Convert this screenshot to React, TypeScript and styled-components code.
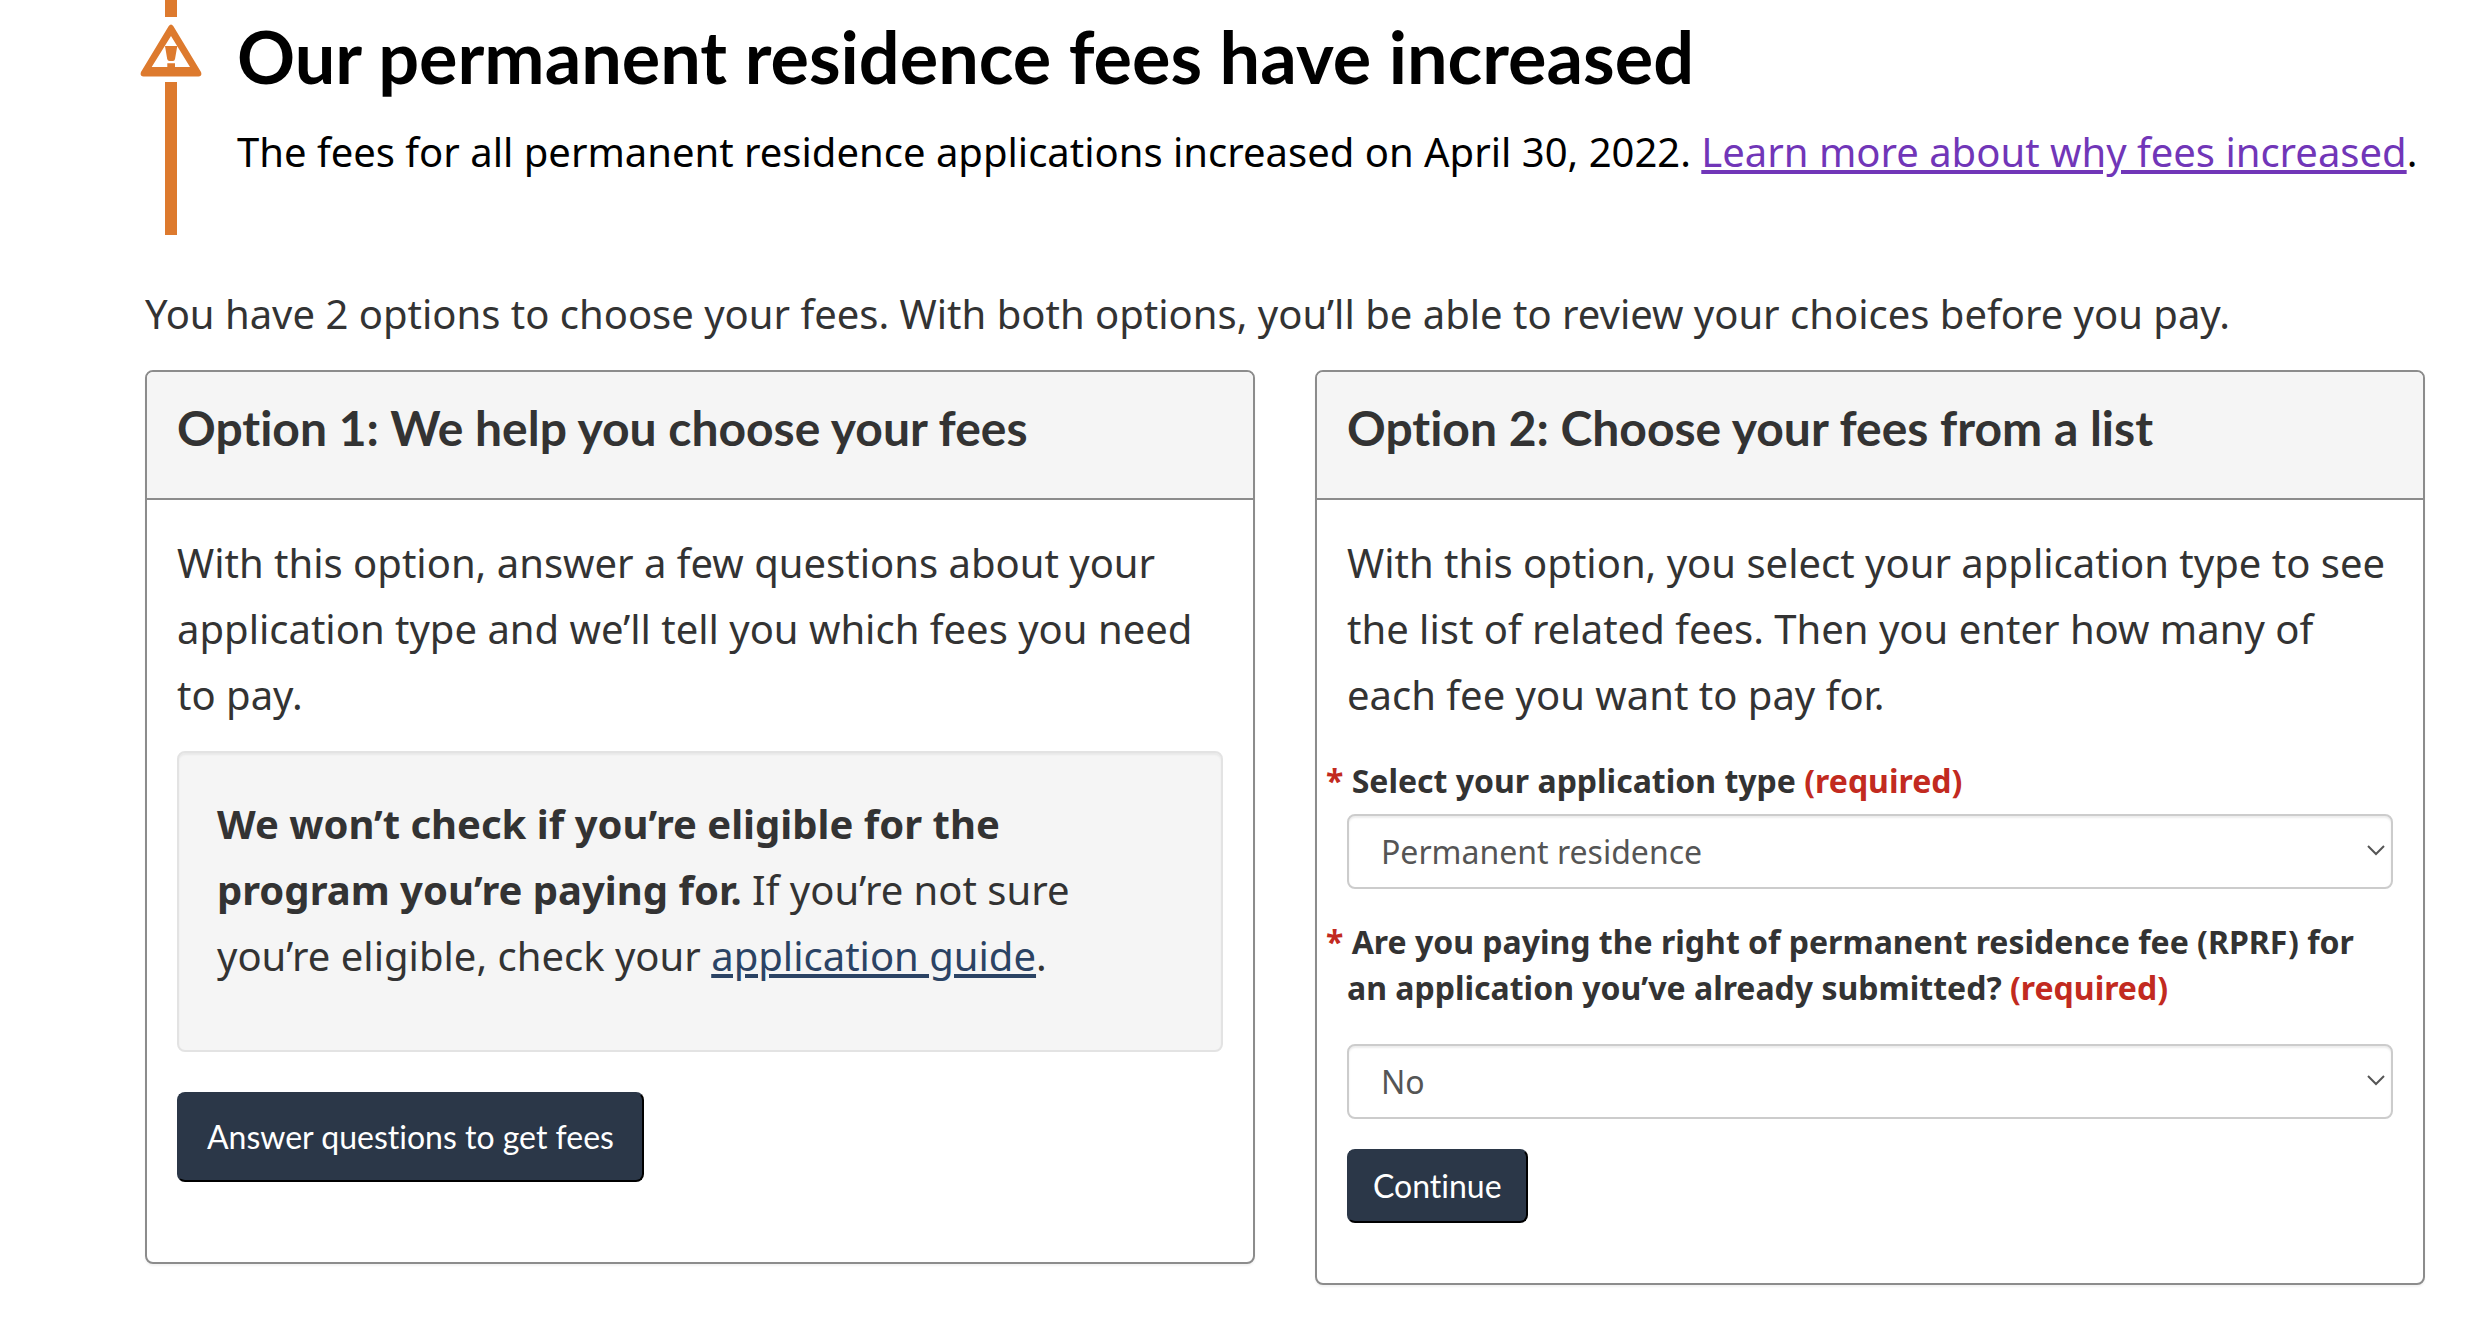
import React, { useId, useState } from "react";
import styled, { createGlobalStyle } from "styled-components";

const bodyFont = `"Noto Sans", "Open Sans", sans-serif`;
const headingFont = `Lato, "Liberation Sans", sans-serif`;

const GlobalStyle = createGlobalStyle`
  *, *::before, *::after { box-sizing: border-box; }
  body {
    margin: 0;
    background: #fff;
    color: #333;
    font: 40px/66px ${bodyFont};
    font-variant-ligatures: no-common-ligatures;
  }
`;

const Page = styled.main`
  padding: 0 53px 40px 145px;
`;

const Alert = styled.section`
  position: relative;
  margin: 0 0 46px 20px;
  padding: 16px 0 27px 60px;
  border-left: 12px solid #dd7a2e;
  color: #000;
`;

const AlertBadge = styled.span`
  position: absolute;
  top: 17px;
  left: -38px;
  display: flex;
  align-items: center;
  justify-content: center;
  width: 64px;
  height: 65px;
  padding-top: 2px;
  background: #fff;
`;

const AlertTitle = styled.h2`
  margin: 0 0 23px;
  font-family: ${headingFont};
  font-size: 72px;
  line-height: 80px;
`;

const Paragraph = styled.p`
  margin: 0 0 23px;
`;

const Link = styled.a<{ $visited?: boolean }>`
  color: ${(p) => (p.$visited ? "#7136b8" : "#2b4364")};
  text-decoration: underline;
  text-decoration-thickness: 4px;
  text-underline-offset: 3px;
`;

const Options = styled.div`
  display: grid;
  grid-template-columns: repeat(2, minmax(0, 1fr));
  align-items: start;
  gap: 60px;
`;

const Panel = styled.section`
  border: 2px solid #8c8c8c;
  border-radius: 8px;
  background: #fff;
  box-shadow: 0 2px 2px rgba(0, 0, 0, 0.05);
`;

const PanelHeader = styled.header`
  padding: 23px 30px 37px;
  border-bottom: 2px solid #8c8c8c;
  border-radius: 6px 6px 0 0;
  background: #f5f5f5;
`;

const PanelTitle = styled.h3`
  margin: 0;
  font-family: ${headingFont};
  font-size: 48px;
  line-height: 66px;
`;

const PanelBody = styled.div<{ $bottom: number }>`
  padding: 30px 30px ${(p) => p.$bottom}px;
`;

const Well = styled.div`
  margin-bottom: 40px;
  padding: 38px 60px 38px 38px;
  border: 2px solid #e3e3e3;
  border-radius: 8px;
  background: #f5f5f5;
  box-shadow: inset 0 2px 2px rgba(0, 0, 0, 0.05);
`;

const Button = styled.button<{ $large?: boolean }>`
  display: block;
  height: ${(p) => (p.$large ? 90 : 74)}px;
  padding: 0 ${(p) => (p.$large ? 28 : 24)}px;
  border: 2px solid;
  border-color: #2b3748 #000 #000 #2b3748;
  border-radius: 8px;
  background: #2b3748;
  color: #fff;
  font-family: ${headingFont};
  font-size: 32px;
  line-height: 46px;
  font-variant-ligatures: no-common-ligatures;
  cursor: pointer;
`;

const Form = styled.form`
  display: flex;
  flex-direction: column;
  align-items: flex-start;
  gap: 30px;
  padding-top: 7px;
`;

const Field = styled.div<{ $gap: number }>`
  display: flex;
  flex-direction: column;
  gap: ${(p) => p.$gap}px;
  width: 100%;
`;

const Label = styled.label`
  font-size: 32px;
  line-height: 46px;
  font-weight: 700;
  text-indent: -21px;
`;

const Required = styled.span`
  color: #c22a20;
`;

const SelectBox = styled.div`
  position: relative;
`;

const Select = styled.select`
  display: block;
  width: 100%;
  height: 75px;
  padding: 0 60px 0 32px;
  appearance: none;
  border: 2px solid #ccc;
  border-radius: 8px;
  background: #fff;
  box-shadow: inset 0 2px 2px rgba(0, 0, 0, 0.08);
  color: #555;
  font: 400 32px/46px ${bodyFont};
`;

const Chevron = styled.svg`
  position: absolute;
  top: 31px;
  right: 8px;
  pointer-events: none;
`;

function WarningIcon() {
  return (
    <svg width="62" height="53" viewBox="0 0 62 53" aria-hidden="true">
      <path
        fill="#dd7a2e"
        fillRule="evenodd"
        d="M28.6 2.2Q31 -1.2 33.4 2.2L61 48Q62.4 52.3 58.5 52.500H3.500Q-.4 52.3 1 48ZM31 12L11.700 43H27.300V39.200H35V43H50ZM25 22H37.300L35 35Q34.700 37 33 37H29.500Q27.600 37 27.200 35Z"
      />
    </svg>
  );
}

type SelectFieldProps = { label: string; options: string[]; initial: string; gap: number };

function SelectField({ label, options, initial, gap }: SelectFieldProps) {
  const id = useId();
  const [value, setValue] = useState(initial);
  return (
    <Field $gap={gap}>
      <Label htmlFor={id}>
        <Required aria-hidden="true">* </Required>
        {label} <Required>(required)</Required>
      </Label>
      <SelectBox>
        <Select id={id} required value={value} onChange={(e) => setValue(e.target.value)}>
          {options.map((o) => (
            <option key={o}>{o}</option>
          ))}
        </Select>
        <Chevron width="18" height="11" viewBox="0 0 18 11" aria-hidden="true">
          <path d="M1 1L9 9L17 1" fill="none" stroke="#555" strokeWidth="2" />
        </Chevron>
      </SelectBox>
    </Field>
  );
}

export default function App() {
  return (
    <>
      <GlobalStyle />
      <Page>
        <Alert>
          <AlertBadge>
            <WarningIcon />
          </AlertBadge>
          <AlertTitle>Our permanent residence fees have increased</AlertTitle>
          <Paragraph>
            The fees for all permanent residence applications increased on April 30, 2022.{" "}
            <Link href="#why" $visited>
              Learn more about why fees increased
            </Link>
            .
          </Paragraph>
        </Alert>
        <Paragraph>
          You have 2 options to choose your fees. With both options, you’ll be able to review your
          choices before you pay.
        </Paragraph>
        <Options>
          <Panel>
            <PanelHeader>
              <PanelTitle>Option 1: We help you choose your fees</PanelTitle>
            </PanelHeader>
            <PanelBody $bottom={80}>
              <Paragraph>
                With this option, answer a few questions about your application type and we’ll tell
                you which fees you need to pay.
              </Paragraph>
              <Well>
                <Paragraph>
                  <strong>We won’t check if you’re eligible for the program you’re paying for.</strong>{" "}
                  If you’re not sure you’re eligible, check your{" "}
                  <Link href="#guide">application guide</Link>.
                </Paragraph>
              </Well>
              <Button type="button" $large>
                Answer questions to get fees
              </Button>
            </PanelBody>
          </Panel>
          <Panel>
            <PanelHeader>
              <PanelTitle>Option 2: Choose your fees from a list</PanelTitle>
            </PanelHeader>
            <PanelBody $bottom={60}>
              <Paragraph>
                With this option, you select your application type to see the list of related fees.
                Then you enter how many of each fee you want to pay for.
              </Paragraph>
              <Form onSubmit={(e) => e.preventDefault()}>
                <SelectField
                  label="Select your application type"
                  options={["Permanent residence"]}
                  initial="Permanent residence"
                  gap={10}
                />
                <SelectField
                  label="Are you paying the right of permanent residence fee (RPRF) for an application you’ve already submitted?"
                  options={["No", "Yes"]}
                  initial="No"
                  gap={33}
                />
                <Button type="submit">Continue</Button>
              </Form>
            </PanelBody>
          </Panel>
        </Options>
      </Page>
    </>
  );
}
